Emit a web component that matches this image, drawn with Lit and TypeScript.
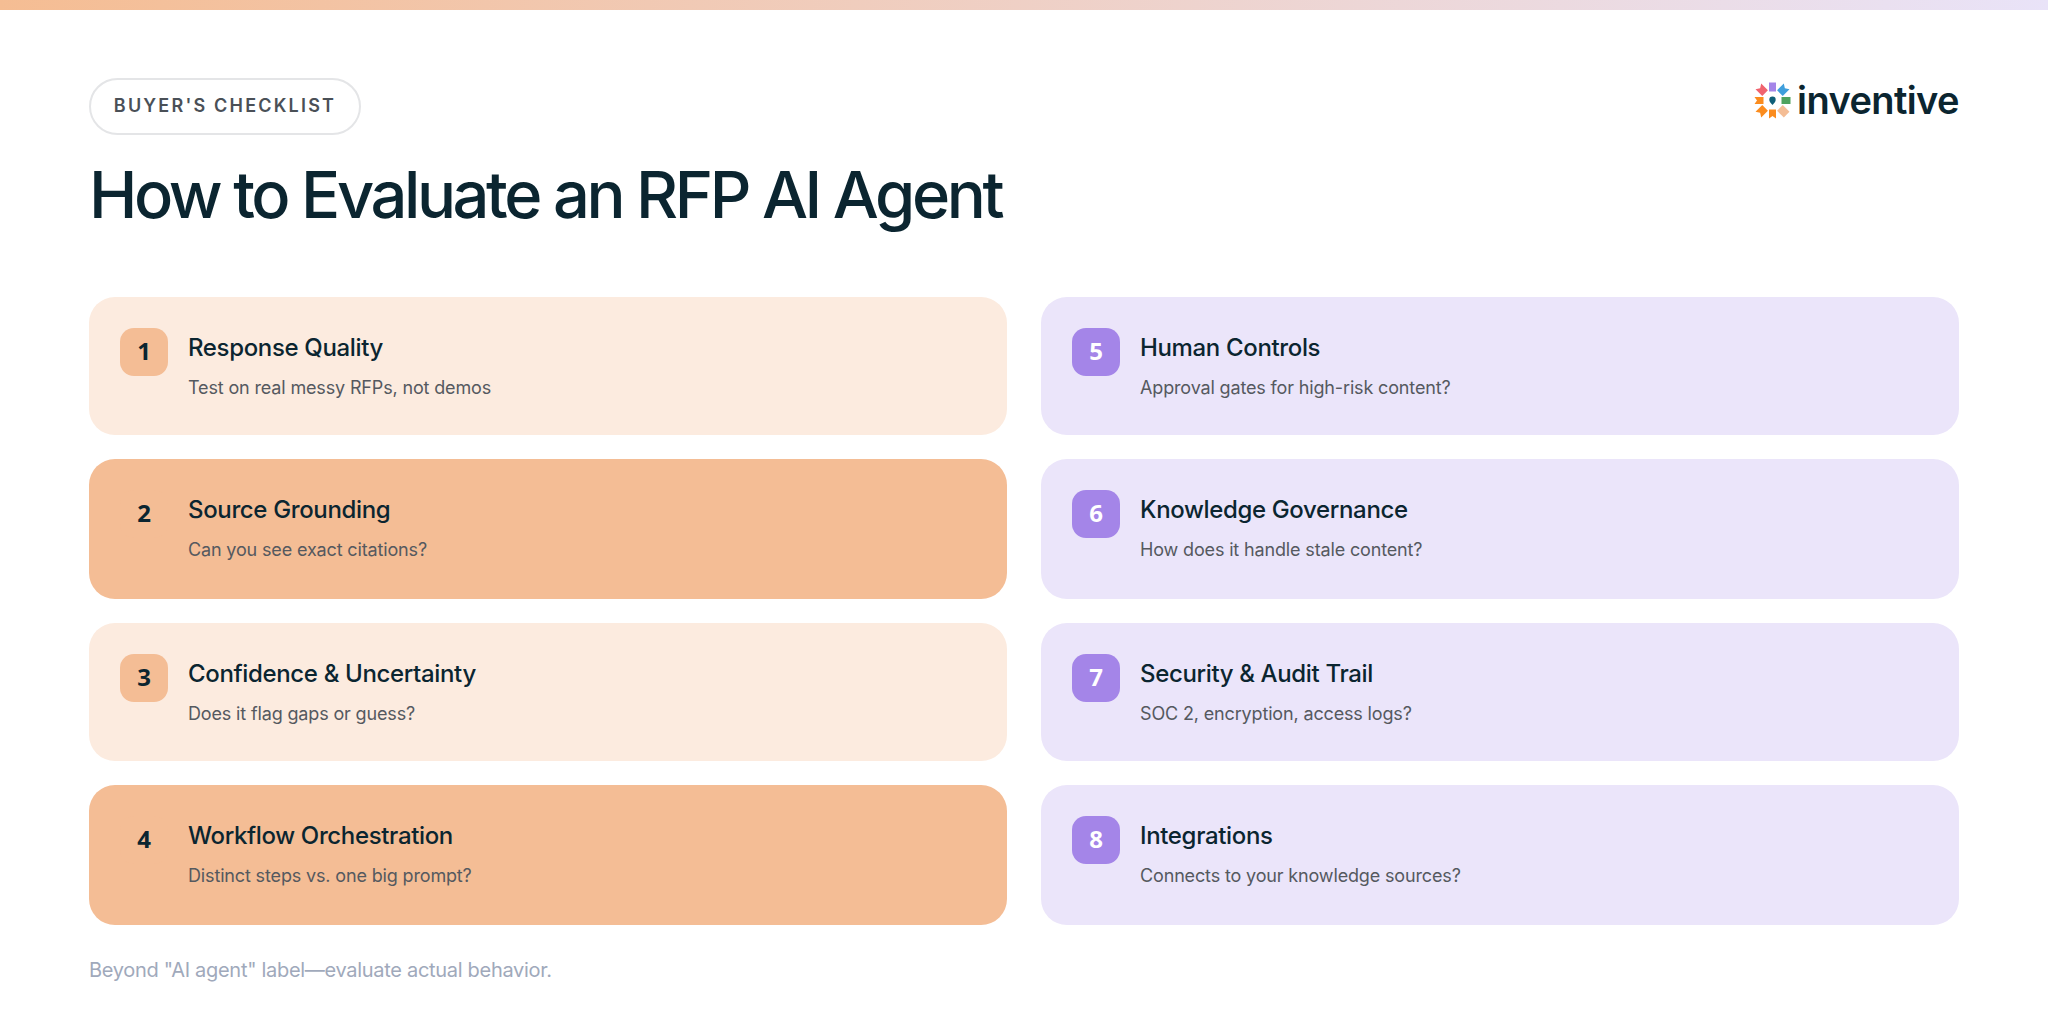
import { css, html, LitElement, svg } from "lit";
import { customElement } from "lit/decorators.js";
import { classMap } from "lit/directives/class-map.js";

interface Item {
  n: number;
  title: string;
  text: string;
}

const leftItems: Item[] = [
  { n: 1, title: "Response Quality", text: "Test on real messy RFPs, not demos" },
  { n: 2, title: "Source Grounding", text: "Can you see exact citations?" },
  { n: 3, title: "Confidence & Uncertainty", text: "Does it flag gaps or guess?" },
  { n: 4, title: "Workflow Orchestration", text: "Distinct steps vs. one big prompt?" },
];

const rightItems: Item[] = [
  { n: 5, title: "Human Controls", text: "Approval gates for high-risk content?" },
  { n: 6, title: "Knowledge Governance", text: "How does it handle stale content?" },
  { n: 7, title: "Security & Audit Trail", text: "SOC 2, encryption, access logs?" },
  { n: 8, title: "Integrations", text: "Connects to your knowledge sources?" },
];

const PLAIN = "M-3.5 -18 H3.5 V-9 H-3.5 Z";
const NOTCH = "M-3.5 -18 L0 -15.5 L3.5 -18 V-9 H-3.5 Z";
const DIAG = "M-4 -20 H4 V-10.5 H-4 Z";
const DIAG_NOTCH = "M-4 -20 L0 -17.5 L4 -20 V-10.5 H-4 Z";

const tabs = [
  { a: 0, c: "#a485e8", d: PLAIN },
  { a: 45, c: "#3f9fdc", d: DIAG_NOTCH },
  { a: 90, c: "#4fa35f", d: PLAIN },
  { a: 135, c: "#f4bd95", d: DIAG },
  { a: 180, c: "#fb8c1e", d: NOTCH },
  { a: 225, c: "#fb8c1e", d: DIAG_NOTCH },
  { a: 270, c: "#fb8c1e", d: NOTCH },
  { a: 315, c: "#f0636e", d: DIAG_NOTCH },
];

@customElement("app-root")
export class AppRoot extends LitElement {
  static styles = css`
    :host {
      display: block;
      width: 2048px;
      height: 1024px;
      overflow: hidden;
      background: #ffffff;
      font-family: Inter, "Noto Sans", Arial, sans-serif;
      color: #0b2530;
    }

    .bar {
      height: 10px;
      background: linear-gradient(90deg, #f5bd93, #e9e3f8);
    }

    .page {
      padding: 68px 89px 0;
    }

    .head {
      display: flex;
      justify-content: space-between;
      align-items: flex-start;
    }

    .pill {
      box-sizing: border-box;
      width: 272px;
      height: 57px;
      padding-bottom: 2px;
      display: flex;
      align-items: center;
      justify-content: center;
      border: 2px solid #e4e5e7;
      border-radius: 999px;
      font-size: 18px;
      font-weight: 600;
      letter-spacing: 2.2px;
      color: #4a5057;
      white-space: nowrap;
    }

    .logo {
      display: flex;
      align-items: center;
      gap: 6px;
    }

    .logo svg {
      display: block;
    }

    .word {
      font-size: 38px;
      line-height: 44px;
      font-weight: 600;
      letter-spacing: -0.6px;
      color: #0b2530;
    }

    h1 {
      margin: 21px 0 0;
      font-size: 65px;
      line-height: 78px;
      font-weight: 500;
      letter-spacing: -3.4px;
      color: #0b2530;
    }

    .grid {
      margin-top: 63px;
      display: grid;
      grid-template-columns: 918px 918px;
      grid-template-rows: 138px 140px 138px 140px;
      grid-auto-flow: column;
      column-gap: 34px;
      row-gap: 24px;
    }

    .card {
      box-sizing: border-box;
      padding: 31px;
      display: flex;
      gap: 20px;
      border-radius: 26px;
    }

    .card.light {
      background: #fcebdf;
    }

    .card.strong {
      background: #f4bd95;
    }

    .card.lilac {
      background: #ebe5fa;
    }

    .num {
      box-sizing: border-box;
      flex: none;
      width: 48px;
      height: 48px;
      padding-bottom: 3px;
      display: flex;
      align-items: center;
      justify-content: center;
      border-radius: 14px;
      font-family: "Open Sans", sans-serif;
      font-size: 24px;
      font-weight: 700;
      background: #f4bd95;
      color: #0b2530;
    }

    .lilac .num {
      background: #a485e8;
      color: #ffffff;
    }

    .body {
      padding-top: 5px;
    }

    .title {
      font-size: 24px;
      line-height: 30px;
      font-weight: 500;
      letter-spacing: -0.35px;
      color: #0b2530;
    }

    .text {
      margin-top: 12px;
      font-size: 18px;
      line-height: 26px;
      letter-spacing: -0.15px;
      color: #55595f;
    }

    .foot {
      margin-top: 32px;
      font-size: 20px;
      line-height: 26px;
      letter-spacing: -0.3px;
      color: #a0a9bb;
    }
  `;

  private renderCard(item: Item) {
    const lilac = item.n > 4;
    const classes = {
      card: true,
      lilac,
      light: !lilac && item.n % 2 === 1,
      strong: !lilac && item.n % 2 === 0,
    };
    return html`
      <div class=${classMap(classes)}>
        <div class="num">${item.n}</div>
        <div class="body">
          <div class="title">${item.title}</div>
          <div class="text">${item.text}</div>
        </div>
      </div>
    `;
  }

  render() {
    return html`
      <div class="bar"></div>
      <div class="page">
        <div class="head">
          <div class="pill">BUYER'S CHECKLIST</div>
          <div class="logo">
            <svg width="37" height="37" viewBox="-18.5 -18.5 37 37">
              ${tabs.map((t) => svg`<path transform="rotate(${t.a})" d=${t.d} fill=${t.c} />`)}
              <path d="M0 4.6 C-2 2.4 -3.2 1 -3.2 -.7 A3.2 3.2 0 1 1 3.2 -.7 C3.2 1 2 2.4 0 4.6 Z" fill="#0f5f78" />
            </svg>
            <span class="word">inventive</span>
          </div>
        </div>
        <h1>How to Evaluate an RFP AI Agent</h1>
        <div class="grid">
          ${leftItems.map((i) => this.renderCard(i))}
          ${rightItems.map((i) => this.renderCard(i))}
        </div>
        <div class="foot">Beyond "AI agent" label—evaluate actual behavior.</div>
      </div>
    `;
  }
}
